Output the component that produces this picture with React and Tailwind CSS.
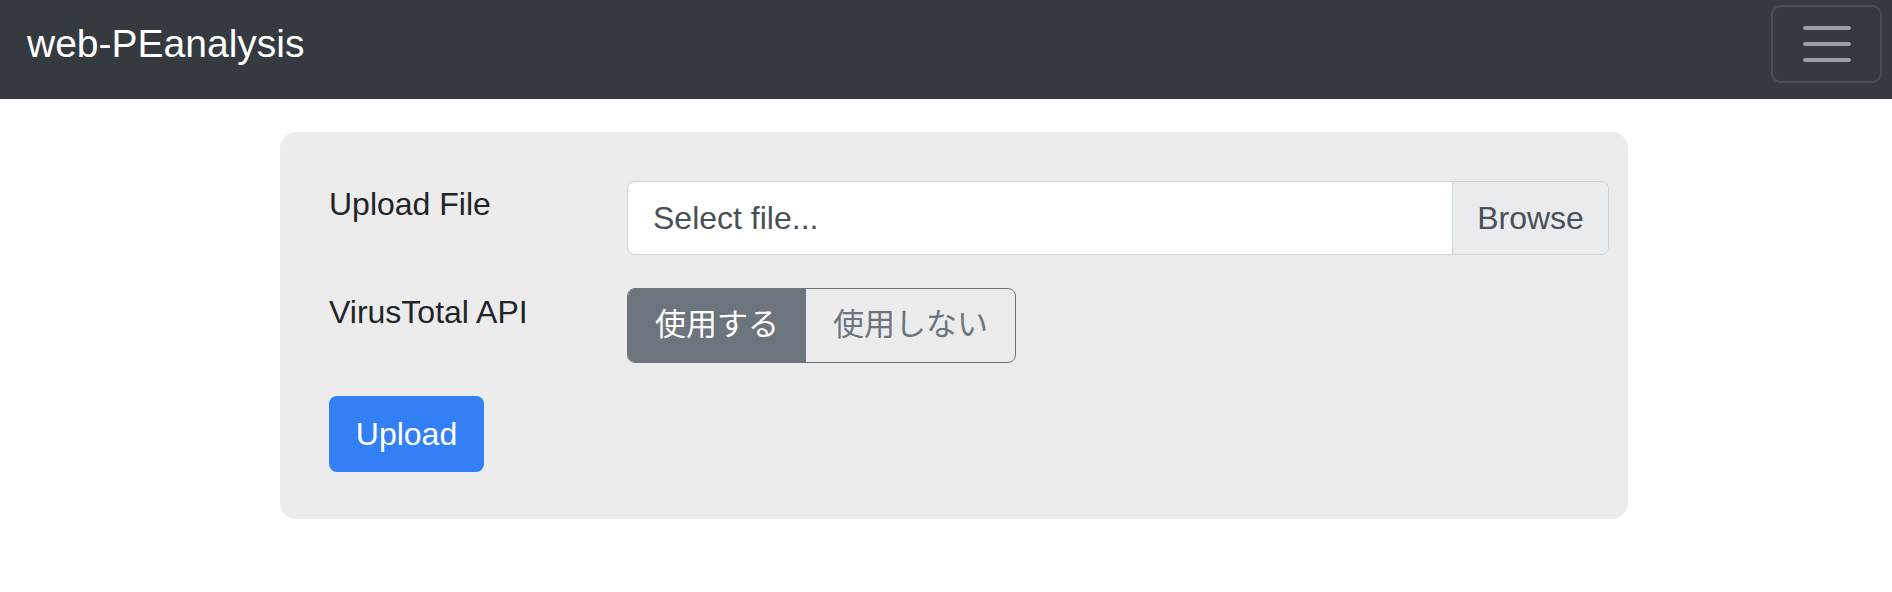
export default function App() {
  return (
    <div className="min-h-screen bg-white font-['Liberation_Sans','Noto_Sans_CJK_JP',sans-serif] text-[#212529]">
      <nav className="flex h-[99px] justify-between bg-[#343a40] pl-[27px] pr-[10px] pt-[5px]">
        <div className="flex h-[78px] items-center text-[39px] text-white">web-PEanalysis</div>
        <button className="flex h-[78px] w-[111px] flex-col items-center justify-center gap-[12px] rounded-[10px] border-2 border-white/10">
          <span className="h-[4px] w-[48px] rounded-full bg-[#9a9da1]" />
          <span className="h-[4px] w-[48px] rounded-full bg-[#9a9da1]" />
          <span className="h-[4px] w-[48px] rounded-full bg-[#9a9da1]" />
        </button>
      </nav>

      <div className="pt-[33px] pl-[280px]">
        <div className="w-[1348px] rounded-[16px] bg-[#ececec] pt-[49px] pb-[47px] pl-[49px] pr-[19px]">
          {/* file row */}
          <div className="flex">
            <label className="w-[298px] text-[32px] leading-[46px]">Upload File</label>
            <div className="flex h-[74px] flex-1 rounded-[8px] border border-[#ced4da] bg-white text-[32px] text-[#495057]">
              <div className="flex flex-1 items-center pl-[25px]">Select file...</div>
              <div className="flex w-[156px] items-center justify-center rounded-r-[8px] border-l border-[#ced4da] bg-[#e9ecef]">
                Browse
              </div>
            </div>
          </div>

          {/* api row */}
          <div className="mt-[33px] flex">
            <label className="w-[298px] pt-[1px] text-[32px] leading-[46px]">VirusTotal API</label>
            <div className="flex h-[75px] overflow-hidden rounded-[8px] border border-[#6c757d] text-[31px]">
              <div className="flex w-[178px] items-center justify-center bg-[#6c757d] text-white">使用する</div>
              <div className="flex w-[209px] items-center justify-center text-[#6c757d]">使用しない</div>
            </div>
          </div>

          <button className="mt-[33px] flex h-[76px] w-[155px] items-center justify-center rounded-[8px] bg-[#3380f6] text-[32px] text-white">
            Upload
          </button>
        </div>
      </div>
    </div>
  );
}
